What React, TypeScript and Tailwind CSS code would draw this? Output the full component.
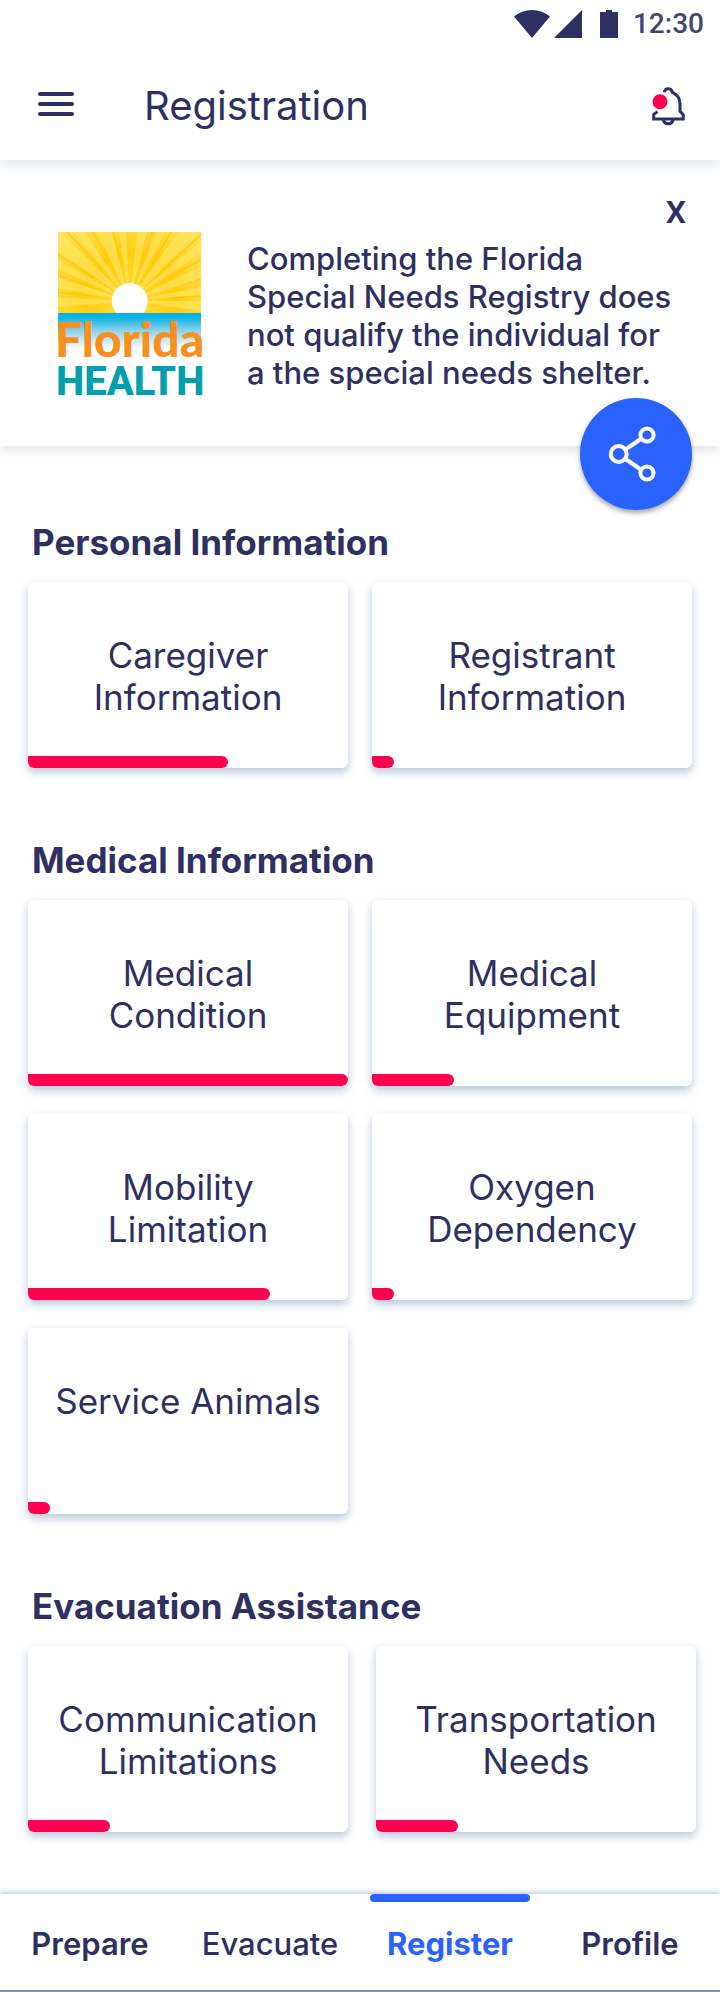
type CardItem = { label: string; progress: number };
type SectionData = { title: string; wide?: boolean; items: CardItem[] };

const sections: SectionData[] = [
  {
    title: 'Personal Information',
    items: [
      { label: 'Caregiver Information', progress: 62.5 },
      { label: 'Registrant Information', progress: 7 },
    ],
  },
  {
    title: 'Medical Information',
    items: [
      { label: 'Medical Condition', progress: 100 },
      { label: 'Medical Equipment', progress: 25.6 },
      { label: 'Mobility Limitation', progress: 75.6 },
      { label: 'Oxygen Dependency', progress: 7 },
      { label: 'Service Animals', progress: 7 },
    ],
  },
  {
    title: 'Evacuation Assistance',
    wide: true,
    items: [
      { label: 'Communication Limitations', progress: 25.6 },
      { label: 'Transportation Needs', progress: 25.6 },
    ],
  },
];

function StatusBar() {
  return (
    <div className="flex h-12 items-center justify-end pr-4">
      <svg width="36" height="28" viewBox="0 0 36 28" fill="#2d3061" aria-hidden="true">
        <path d="M0 6.500C5 2.200 11 0 18 0s13 2.200 18 6.500L18 28z" />
      </svg>
      <svg className="ml-1" width="28" height="28" viewBox="0 0 28 28" fill="#2d3061" aria-hidden="true">
        <path d="M28 0v28H0z" />
      </svg>
      <svg className="mr-[15px] ml-[18px]" width="18" height="28" viewBox="0 0 18 28" fill="#2d3061" aria-hidden="true">
        <path d="M6 0h6v2h6v26H0V2h6z" />
      </svg>
      <span className="font-[Roboto,sans-serif] text-[28px] leading-8 font-medium text-[#43466f]">12:30</span>
    </div>
  );
}

function Header() {
  return (
    <header className="relative z-10 bg-white shadow-[0_6px_10px_rgba(60,90,120,0.13)]">
      <StatusBar />
      <div className="flex h-28 items-center pr-[34px] pl-[38px]">
        <button type="button" aria-label="Open menu" className="flex flex-col gap-1.5">
          <span className="h-1 w-9 rounded-full bg-[#2d3061]" />
          <span className="h-1 w-9 rounded-full bg-[#2d3061]" />
          <span className="h-1 w-9 rounded-full bg-[#2d3061]" />
        </button>
        <h1 className="ml-[70px] flex-1 pt-1 text-[40px] leading-[48px]">Registration</h1>
        <button type="button" aria-label="Notifications" className="pt-1">
          <svg width="34" height="39" viewBox="0 0 34 39" fill="none" stroke="#2d3061" strokeWidth="3">
            <path d="M12.200 5.200C12.600 3 14 1.700 16.200 1.700s3.700 1.300 4.100 3.600c4.700 2 7.500 6 7.700 11.200v7.700l3.200 3.500V32H1.700v-4.600l3.800-2.800" />
            <path d="M11.200 32c.3 3 2.300 4.700 5 4.700s4.700-1.700 5-4.700" />
            <circle cx="8" cy="14.700" r="7.500" fill="#ff0050" stroke="none" />
          </svg>
        </button>
      </div>
    </header>
  );
}

const SUN_X = 71.7;
const SUN_Y = 69;

function wedge(deg: number, spread: number) {
  const point = (d: number) => {
    const a = (d * Math.PI) / 180;
    return `${(SUN_X + Math.cos(a) * 140).toFixed(1)},${(SUN_Y - Math.sin(a) * 140).toFixed(1)}`;
  };
  return `${SUN_X},${SUN_Y} ${point(deg - spread)} ${point(deg + spread)}`;
}

const lightRays = [
  [-4, 4], [8, 3], [21, 5], [37, 3], [50, 5], [66, 3], [80, 4], [96, 3], [110, 5], [126, 3], [140, 5], [153, 3], [166, 4], [181, 4],
];
const thinRays = [4, 17, 30, 43, 59, 72, 103, 118, 132, 147, 160, 173];

function FloridaHealthLogo() {
  return (
    <svg className="shrink-0 overflow-visible" width="144" height="164" viewBox="0 0 144 164" role="img" aria-label="Florida Health">
      <defs>
        <radialGradient id="sky" gradientUnits="userSpaceOnUse" cx={SUN_X} cy={SUN_Y} r="92">
          <stop offset="0.2" stopColor="#ffd629" />
          <stop offset="0.5" stopColor="#ffce10" />
          <stop offset="1" stopColor="#ffe04a" />
        </radialGradient>
        <linearGradient id="water" x1="0" y1="0" x2="0" y2="1">
          <stop offset="0" stopColor="#00aeea" />
          <stop offset="0.15" stopColor="#14b4e6" />
          <stop offset="0.5" stopColor="#8fd3ea" />
          <stop offset="1" stopColor="#ffffff" />
        </linearGradient>
        <clipPath id="skyClip">
          <rect width="143" height="81" />
        </clipPath>
      </defs>
      <g clipPath="url(#skyClip)">
        <rect width="143" height="81" fill="url(#sky)" />
        {lightRays.map(([d, spread]) => (
          <polygon key={d} points={wedge(d, spread)} fill="#ffe96e" fillOpacity="0.55" />
        ))}
        {thinRays.map((d) => (
          <polygon key={d} points={wedge(d, 0.3)} fill="#efb727" fillOpacity="0.8" />
        ))}
        <circle cx={SUN_X} cy={SUN_Y} r="18" fill="#ffffff" />
      </g>
      <rect y="81" width="143" height="36" fill="url(#water)" />
      <text x="-3" y="125" fontFamily="Lato, sans-serif" fontWeight="900" fontSize="48" fill="#f7901e">
        Florida
      </text>
      <text x="-2" y="163" fontFamily="Roboto, sans-serif" fontWeight="800" fontSize="40" fill="#00a0af">
        HEALTH
      </text>
    </svg>
  );
}

function Banner() {
  return (
    <section className="relative min-h-[286px] bg-white pt-9 pr-[34px] pl-[58px] shadow-[0_5px_8px_rgba(0,0,0,0.1)]">
      <div className="flex justify-end">
        <button type="button" aria-label="Dismiss" className="font-[Roboto,sans-serif] text-[32px] leading-8 font-semibold">
          X
        </button>
      </div>
      <div className="mt-1 flex gap-[45px]">
        <FloridaHealthLogo />
        <p className="pt-2 text-[31px] leading-[38px] font-medium">
          Completing the Florida Special Needs Registry does not qualify the individual for a&nbsp;the special needs shelter.
        </p>
      </div>
      <button
        type="button"
        aria-label="Share"
        className="absolute right-7 -bottom-16 h-28 w-28 rounded-full bg-[#2962ff] shadow-[0_3px_5px_rgba(0,0,0,0.35)]"
      >
        <svg width="112" height="112" viewBox="0 0 112 112" fill="none" stroke="#ffffff" strokeWidth="4">
          <path d="M45.500 51.500 61.500 40.500M45.500 61 61.500 72" />
          <circle cx="38.700" cy="56" r="8" />
          <circle cx="67" cy="37" r="6.600" />
          <circle cx="67" cy="75" r="6.600" />
        </svg>
      </button>
    </section>
  );
}

function Card({ label, progress }: CardItem) {
  return (
    <button
      type="button"
      className="flex min-h-[186px] flex-col justify-between overflow-hidden rounded-md bg-white shadow-[0_4px_10px_rgba(50,95,145,0.36)]"
    >
      <span className="w-full px-5 pt-[52px] text-center text-[35px] leading-[42px]">{label}</span>
      <span className="block h-3 rounded-r-full bg-[#ff0050]" style={{ width: `${progress}%` }} />
    </button>
  );
}

function Section({ title, wide, items }: SectionData) {
  return (
    <section>
      <h2 className="mb-5 pl-8 text-[35px] leading-10 font-bold">{title}</h2>
      <div className={wide ? 'grid grid-cols-2 gap-7 pr-6 pl-7' : 'grid grid-cols-2 gap-x-6 gap-y-7 px-7'}>
        {items.map((item) => (
          <Card key={item.label} {...item} />
        ))}
      </div>
    </section>
  );
}

function BottomNav() {
  const link = 'relative flex items-center justify-center pt-1';
  return (
    <nav className="mt-auto grid h-[98px] grid-cols-4 border-b-2 border-[#8693a2] bg-white text-[31px] leading-9 shadow-[0_-1px_6px_rgba(50,85,140,0.4)]">
      <a href="#prepare" className={`${link} font-semibold`}>Prepare</a>
      <a href="#evacuate" className={`${link} font-medium`}>Evacuate</a>
      <a href="#register" aria-current="page" className={`${link} font-bold text-[#2962ff]`}>
        <span className="absolute top-0 h-2 w-40 rounded-full bg-[#2962ff]" />
        Register
      </a>
      <a href="#profile" className={`${link} font-semibold`}>Profile</a>
    </nav>
  );
}

export default function App() {
  return (
    <div className="flex min-h-screen flex-col bg-white font-[Inter,sans-serif] text-[#2d3061]">
      <Header />
      <Banner />
      <main className="flex flex-col gap-[72px] pt-[76px] pb-[60px]">
        {sections.map((section) => (
          <Section key={section.title} {...section} />
        ))}
      </main>
      <BottomNav />
    </div>
  );
}
